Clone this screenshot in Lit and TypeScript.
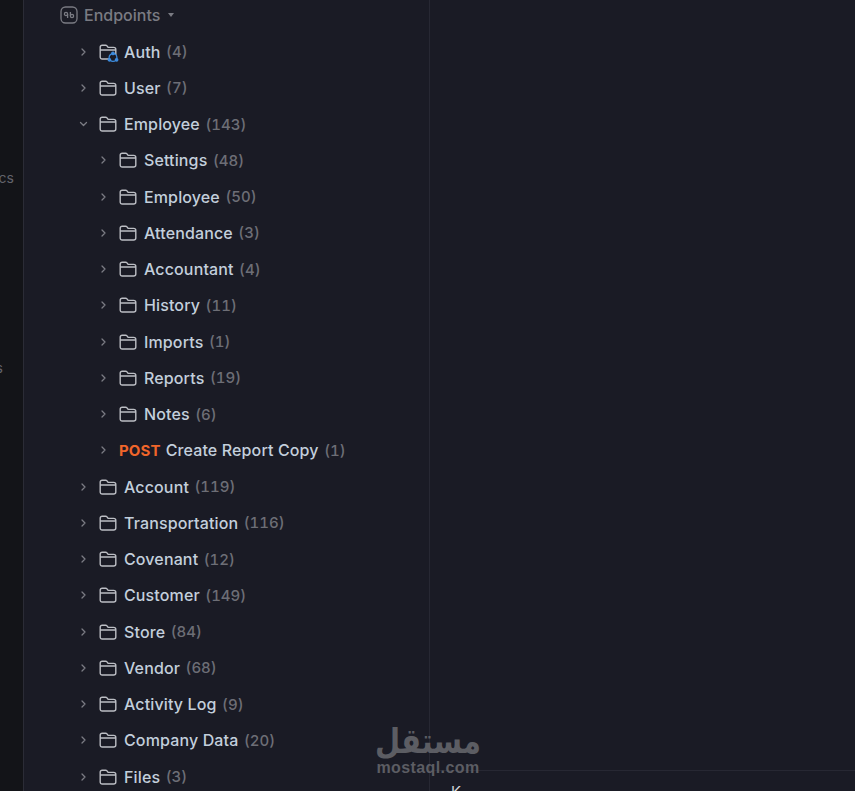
import { LitElement, html, css, svg } from "lit";
import { customElement } from "lit/decorators.js";

type Item = {
  name: string;
  count: number;
  level: number;
  open?: boolean;
  post?: boolean;
  shared?: boolean;
};

const items: Item[] = [
  { name: "Auth", count: 4, level: 1, shared: true },
  { name: "User", count: 7, level: 1 },
  { name: "Employee", count: 143, level: 1, open: true },
  { name: "Settings", count: 48, level: 2 },
  { name: "Employee", count: 50, level: 2 },
  { name: "Attendance", count: 3, level: 2 },
  { name: "Accountant", count: 4, level: 2 },
  { name: "History", count: 11, level: 2 },
  { name: "Imports", count: 1, level: 2 },
  { name: "Reports", count: 19, level: 2 },
  { name: "Notes", count: 6, level: 2 },
  { name: "Create Report Copy", count: 1, level: 2, post: true },
  { name: "Account", count: 119, level: 1 },
  { name: "Transportation", count: 116, level: 1 },
  { name: "Covenant", count: 12, level: 1 },
  { name: "Customer", count: 149, level: 1 },
  { name: "Store", count: 84, level: 1 },
  { name: "Vendor", count: 68, level: 1 },
  { name: "Activity Log", count: 9, level: 1 },
  { name: "Company Data", count: 20, level: 1 },
  { name: "Files", count: 3, level: 1 },
];

const folderPath = "M1.2 13V3.2C1.2 2 2 1.2 3.2 1.2H6.6C7.2 1.2 7.6 1.4 8 1.9L9.1 3.4H14.6C15.9 3.4 16.8 4.2 16.8 5.5V13C16.8 14.2 15.9 15 14.6 15H3.2C2 15 1.2 14.2 1.2 13ZM1.2 6H16.8";

@customElement("app-root")
export class AppRoot extends LitElement {
  static styles = css`
    :host {
      display: block;
      font-family: Inter, "Liberation Sans", sans-serif;
    }
    .page {
      position: relative;
      display: flex;
      height: 791px;
      overflow: hidden;
      background: #1a1b25;
    }
    .rail {
      box-sizing: border-box;
      width: 24px;
      flex: none;
      display: flex;
      flex-direction: column;
      align-items: flex-end;
      gap: 172px;
      padding: 169px 9px 0 0;
      overflow: hidden;
      background: #131418;
      border-right: 1px solid #2b2c36;
      color: #62636b;
      font-size: 14px;
      line-height: 18px;
      white-space: nowrap;
    }
    .rail-short {
      margin-right: 11px;
    }
    .tree {
      box-sizing: border-box;
      width: 406px;
      flex: none;
      overflow: hidden;
      border-right: 1px solid #272833;
    }
    .section {
      display: flex;
      align-items: center;
      height: 30px;
      margin-bottom: 3.6px;
      padding-left: 36px;
      color: #7a7b83;
      font-size: 16px;
      font-weight: 500;
    }
    .section svg {
      margin-right: 6px;
    }
    .caret {
      margin-left: 8px;
      width: 0;
      height: 0;
      border-left: 3px solid transparent;
      border-right: 3px solid transparent;
      border-top: 4px solid #7a7b83;
    }
    .row {
      display: flex;
      align-items: center;
      height: 36.25px;
      color: #c3cfdc;
      font-size: 16px;
      font-weight: 500;
      letter-spacing: 0.13px;
      white-space: nowrap;
    }
    .l1 {
      padding-left: 55px;
    }
    .l2 {
      padding-left: 75px;
    }
    .chevron {
      flex: none;
      margin-right: 11px;
    }
    .folder {
      flex: none;
      position: relative;
      width: 18px;
      height: 16px;
      margin-right: 7px;
    }
    .badge {
      position: absolute;
      left: 8px;
      top: 7px;
    }
    .post {
      margin-right: 5px;
      color: #f0652a;
      font-weight: 700;
      font-size: 15px;
    }
    .count {
      margin-left: 5.5px;
      color: #6d6e76;
      font-size: 15px;
      letter-spacing: 0;
      font-variant-numeric: tabular-nums;
    }
    .side {
      flex: 1;
      display: flex;
      flex-direction: column;
    }
    .spacer {
      flex: none;
      height: 770px;
    }
    .bottom {
      flex: 1;
      border-top: 1px solid #272833;
      padding: 12px 0 0 21px;
      color: #d3d4d8;
      font-size: 15px;
      line-height: 18px;
    }
    .mark {
      position: absolute;
      left: 375px;
      top: 722px;
      width: 106px;
      color: #5c5d63;
      text-align: center;
      font-weight: 700;
    }
    .mark-ar {
      font-family: "DejaVu Sans", sans-serif;
      font-size: 29px;
      line-height: 38px;
      transform: scaleY(1.2);
    }
    .mark-en {
      font-family: "Liberation Sans", sans-serif;
      font-size: 16px;
      line-height: 16px;
      letter-spacing: 0.4px;
    }
  `;

  renderChevron(open?: boolean) {
    return html`<svg class="chevron" width="9" height="10" viewBox="0 0 9 10" fill="none" stroke="#7b7c84" stroke-width="1.3" stroke-linecap="round" stroke-linejoin="round">
      ${open ? svg`<path d="M1.5 3.5L4.5 6.5L7.5 3.5"/>` : svg`<path d="M3 2L6 5L3 8"/>`}
    </svg>`;
  }

  renderFolder(shared?: boolean) {
    return html`<span class="folder">
      <svg width="18" height="16" viewBox="0 0 18 16" fill="none" stroke="#bcbec4" stroke-width="1.4" stroke-linejoin="round"><path d=${folderPath}/></svg>
      ${shared
        ? html`<svg class="badge" width="12" height="12" viewBox="0 0 12 12" fill="#1a1b25" stroke="#3d8bdc" stroke-width="1.3">
            <circle cx="6" cy="6.5" r="3.9"/>
            <circle cx="6" cy="2.4" r="1.2" fill="#3d8bdc"/>
            <circle cx="2.4" cy="8.8" r="1.2" fill="#3d8bdc"/>
            <circle cx="9.6" cy="8.8" r="1.2" fill="#3d8bdc"/>
          </svg>`
        : ""}
    </span>`;
  }

  renderRow(item: Item) {
    return html`<div class="row ${item.level === 1 ? "l1" : "l2"}">
      ${this.renderChevron(item.open)}
      ${item.post ? html`<span class="post">POST</span>` : this.renderFolder(item.shared)}
      <span>${item.name}</span>
      <span class="count">(${item.count})</span>
    </div>`;
  }

  render() {
    return html`<div class="page">
      <div class="rail"><span>Docs</span><span class="rail-short">Settings</span></div>
      <div class="tree">
        <div class="section">
          <svg width="18" height="18" viewBox="0 0 18 18" fill="none" stroke="#7a7b83" stroke-width="1.3">
            <rect x="1" y="1" width="16" height="16" rx="4.5"/>
            <circle cx="6" cy="8" r="1.6"/>
            <circle cx="12" cy="10" r="1.6"/>
            <path d="M7.6 8V12M10.4 10V6"/>
          </svg>
          Endpoints<span class="caret"></span>
        </div>
        ${items.map((item) => this.renderRow(item))}
      </div>
      <div class="side">
        <div class="spacer"></div>
        <div class="bottom">K</div>
      </div>
      <div class="mark">
        <div class="mark-ar">مستقل</div>
        <div class="mark-en">mostaql.com</div>
      </div>
    </div>`;
  }
}
